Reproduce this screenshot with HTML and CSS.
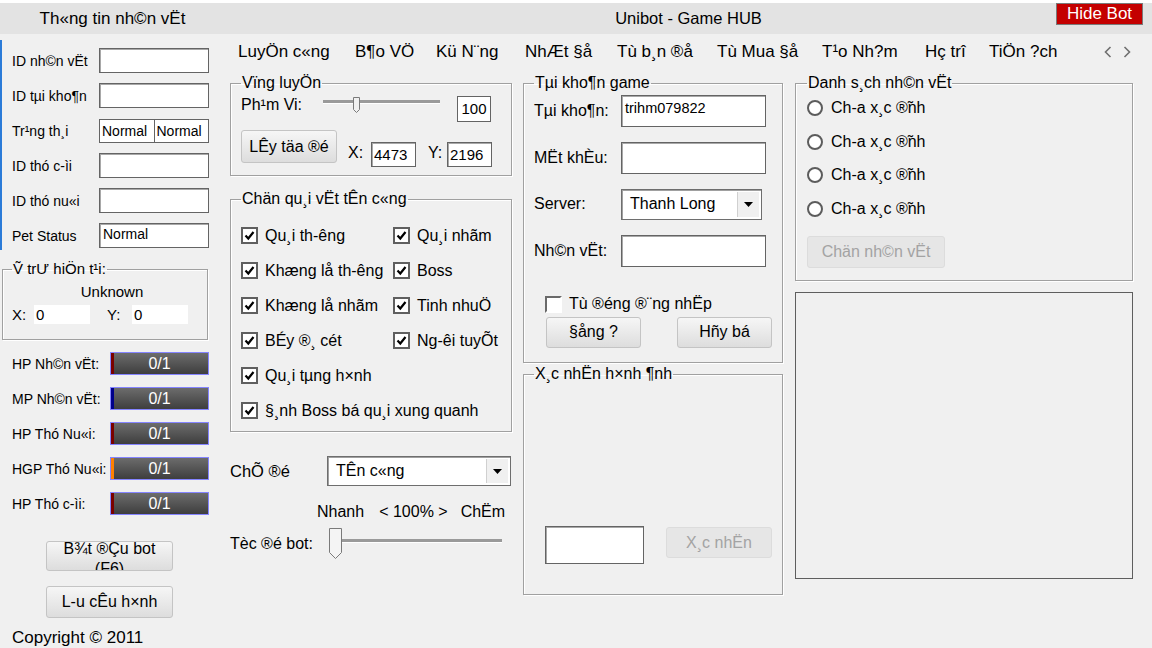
FILE: index.html
```html
<!DOCTYPE html>
<html>
<head>
<meta charset="utf-8">
<title>Unibot - Game HUB</title>
<link rel="stylesheet" href="styles.css">
</head>
<body>
<div class="topline"></div>
<div class="titlebar">
  <div class="side-title">Th«ng tin nh©n vËt</div>
  <div class="app-title">Unibot - Game HUB</div>
  <div class="hide-bot">Hide Bot</div>
</div>
<div class="main">
  <div class="side">
    <div class="fields">
      <label>ID nh©n vËt</label><div class="input"></div>
      <label>ID tµi kho¶n</label><div class="input"></div>
      <label>Tr¹ng th¸i</label><div class="pair"><div>Normal</div><div>Normal</div></div>
      <label>ID thó c-ìi</label><div class="input"></div>
      <label>ID thó nu«i</label><div class="input"></div>
      <label>Pet Status</label><div class="input status">Normal</div>
    </div>
    <fieldset class="pos">
      <legend>Ṽ trƯ hiÖn t¹i:</legend>
      <div class="unknown">Unknown</div>
      <div class="xy">
        <span class="xl">X:</span><div class="coord">0</div>
        <span class="yl">Y:</span><div class="coord">0</div>
      </div>
    </fieldset>
    <div class="bars">
      <label>HP Nh©n vËt:</label><div class="bar hp">0/1</div>
      <label>MP Nh©n vËt:</label><div class="bar mp">0/1</div>
      <label>HP Thó Nu«i:</label><div class="bar hp">0/1</div>
      <label>HGP Thó Nu«i:</label><div class="bar hgp">0/1</div>
      <label>HP Thó c-ìi:</label><div class="bar hp">0/1</div>
    </div>
    <div class="side-buttons">
      <div class="btn side-btn start"><span>B¾t ®Çu bot (F6)</span></div>
      <div class="btn side-btn save">L-u cÊu h×nh</div>
    </div>
    <div class="copyright">Copyright © 2011</div>
  </div>

  <div class="content">
    <div class="tabs">
      <div>LuyÖn c«ng</div>
      <div>B¶o VÖ</div>
      <div>Kü N¨ng</div>
      <div>NhÆt §å</div>
      <div>Tù b¸n ®å</div>
      <div>Tù Mua §å</div>
      <div>T¹o Nh?m</div>
      <div>Hç trî</div>
      <div>TiÖn ?ch</div>
      <div></div>
      <div class="arrows">
        <svg width="8" height="12" viewBox="0 0 8 12"><path d="M6.5 1 L1.5 6 L6.5 11" fill="none" stroke="#707070" stroke-width="1.6"/></svg>
        <svg width="8" height="12" viewBox="0 0 8 12"><path d="M1.5 1 L6.5 6 L1.5 11" fill="none" stroke="#707070" stroke-width="1.6"/></svg>
      </div>
    </div>

    <div class="cols">
      <div class="col col-train">
        <fieldset class="range">
          <legend>Vïng luyÖn</legend>
          <div class="range-row">
            <span class="range-label">Ph¹m Vi:</span>
            <svg class="range-slider" width="117" height="20" viewBox="0 0 117 20">
              <rect x="0" y="4" width="117" height="3" fill="#9a9a9a"/>
              <rect x="0" y="7" width="117" height="1" fill="#ffffff"/>
              <polygon points="30.5,1.5 36.5,1.5 36.5,13.5 33.5,16.5 30.5,13.5" fill="#f0f0f0" stroke="#7a7a7a"/>
            </svg>
            <div class="num-box">100</div>
          </div>
          <div class="coord-row">
            <div class="btn get-pos">LÊy täa ®é</div>
            <span class="c-x">X:</span><div class="num-box small">4473</div>
            <span class="c-y">Y:</span><div class="num-box small">2196</div>
          </div>
        </fieldset>

        <fieldset class="targets">
          <legend>Chän qu¸i vËt tÊn c«ng</legend>
          <div class="check-grid">
            <div class="check"><span class="cb on"><svg width="13" height="13" viewBox="0 0 13 13"><path d="M2.5 6.5 L5.3 9.5 L10.5 3" fill="none" stroke="#000" stroke-width="2.2"/></svg></span>Qu¸i th-êng</div>
            <div class="check"><span class="cb on"><svg width="13" height="13" viewBox="0 0 13 13"><path d="M2.5 6.5 L5.3 9.5 L10.5 3" fill="none" stroke="#000" stroke-width="2.2"/></svg></span>Qu¸i nhãm</div>
            <div class="check"><span class="cb on"><svg width="13" height="13" viewBox="0 0 13 13"><path d="M2.5 6.5 L5.3 9.5 L10.5 3" fill="none" stroke="#000" stroke-width="2.2"/></svg></span>Khæng lå th-êng</div>
            <div class="check"><span class="cb on"><svg width="13" height="13" viewBox="0 0 13 13"><path d="M2.5 6.5 L5.3 9.5 L10.5 3" fill="none" stroke="#000" stroke-width="2.2"/></svg></span>Boss</div>
            <div class="check"><span class="cb on"><svg width="13" height="13" viewBox="0 0 13 13"><path d="M2.5 6.5 L5.3 9.5 L10.5 3" fill="none" stroke="#000" stroke-width="2.2"/></svg></span>Khæng lå nhãm</div>
            <div class="check"><span class="cb on"><svg width="13" height="13" viewBox="0 0 13 13"><path d="M2.5 6.5 L5.3 9.5 L10.5 3" fill="none" stroke="#000" stroke-width="2.2"/></svg></span>Tinh nhuÖ</div>
            <div class="check"><span class="cb on"><svg width="13" height="13" viewBox="0 0 13 13"><path d="M2.5 6.5 L5.3 9.5 L10.5 3" fill="none" stroke="#000" stroke-width="2.2"/></svg></span>BÉy ®¸ cét</div>
            <div class="check"><span class="cb on"><svg width="13" height="13" viewBox="0 0 13 13"><path d="M2.5 6.5 L5.3 9.5 L10.5 3" fill="none" stroke="#000" stroke-width="2.2"/></svg></span>Ng-êi tuyÕt</div>
            <div class="check wide"><span class="cb on"><svg width="13" height="13" viewBox="0 0 13 13"><path d="M2.5 6.5 L5.3 9.5 L10.5 3" fill="none" stroke="#000" stroke-width="2.2"/></svg></span>Qu¸i tµng h×nh</div>
            <div class="check wide"><span class="cb on"><svg width="13" height="13" viewBox="0 0 13 13"><path d="M2.5 6.5 L5.3 9.5 L10.5 3" fill="none" stroke="#000" stroke-width="2.2"/></svg></span>§¸nh Boss bá qu¸i xung quanh</div>
          </div>
        </fieldset>

        <div class="mode-row">
          <span class="mode-label">ChÕ ®é</span>
          <div class="select mode-select">
            <span class="select-text">TÊn c«ng</span>
            <span class="select-btn"><svg width="9" height="5" viewBox="0 0 9 5"><polygon points="0,0 9,0 4.5,5" fill="#000"/></svg></span>
          </div>
        </div>
        <div class="speed-labels">
          <span>Nhanh</span><span class="pct">&lt; 100% &gt;</span><span class="slow">ChËm</span>
        </div>
        <div class="speed-row">
          <span class="speed-label">Tèc ®é bot:</span>
          <svg width="173" height="31" viewBox="0 0 173 31">
            <rect x="11" y="11" width="162" height="3" fill="#9a9a9a"/>
            <rect x="11" y="14" width="162" height="1" fill="#ffffff"/>
            <polygon points="0.5,0.5 12.5,0.5 12.5,24.5 6.5,30.5 0.5,24.5" fill="#f4f4f4" stroke="#7a7a7a"/>
          </svg>
        </div>
      </div>

      <div class="col col-account">
        <fieldset class="account">
          <legend>Tµi kho¶n game</legend>
          <div class="form">
            <label>Tµi kho¶n:</label><div class="input text-in">trihm079822</div>
            <label>MËt khÈu:</label><div class="input"></div>
            <label>Server:</label>
            <div class="select server-select">
              <span class="select-text">Thanh Long</span>
              <span class="select-btn"><svg width="9" height="5" viewBox="0 0 9 5"><polygon points="0,0 9,0 4.5,5" fill="#000"/></svg></span>
            </div>
            <label>Nh©n vËt:</label><div class="input"></div>
          </div>
          <div class="auto-login"><span class="cb off"></span>Tù ®éng ®¨ng nhËp</div>
          <div class="account-buttons">
            <div class="btn acc-btn">§ång ?</div>
            <div class="btn acc-btn">Hñy bá</div>
          </div>
        </fieldset>
        <fieldset class="captcha">
          <legend>X¸c nhËn h×nh ¶nh</legend>
          <div class="captcha-row">
            <div class="input captcha-in"></div>
            <div class="btn disabled confirm">X¸c nhËn</div>
          </div>
        </fieldset>
      </div>

      <div class="col col-chars">
        <fieldset class="chars">
          <legend>Danh s¸ch nh©n vËt</legend>
          <div class="radio-list">
            <div class="radio-row"><span class="radio"></span>Ch-a x¸c ®̃nh</div>
            <div class="radio-row"><span class="radio"></span>Ch-a x¸c ®̃nh</div>
            <div class="radio-row"><span class="radio"></span>Ch-a x¸c ®̃nh</div>
            <div class="radio-row"><span class="radio"></span>Ch-a x¸c ®̃nh</div>
          </div>
          <div class="btn disabled pick">Chän nh©n vËt</div>
        </fieldset>
        <div class="preview"></div>
      </div>
    </div>
  </div>
</div>
</body>
</html>
```

FILE: styles.css
```css
* { box-sizing: border-box; }
html, body { margin: 0; padding: 0; }
body {
  width: 1152px;
  height: 648px;
  overflow: hidden;
  background: #f0f0f0;
  font-family: "Liberation Sans", Arial, sans-serif;
  font-size: 16px;
  color: #000;
}

/* title */
.topline { height: 3px; background: #fff; }
.titlebar {
  position: relative;
  height: 31px;
  background: #e3e3e3;
  display: flex;
  align-items: center;
}
.side-title { width: 225px; text-align: center; font-size: 17px; }
.app-title { flex: 1; text-align: center; font-size: 16.5px; }
.hide-bot {
  position: absolute;
  right: 9px;
  top: 0;
  width: 87px;
  height: 22px;
  background: #c40000;
  border: 1px solid #7a7a7a;
  color: #fff;
  font-size: 17px;
  line-height: 20px;
  text-align: center;
}

.main { display: flex; height: 614px; }

/* left info panel */
.side { width: 225px; display: flex; flex-direction: column; }
.fields {
  display: grid;
  grid-template-columns: 87px 110px;
  grid-auto-rows: 25px;
  row-gap: 10px;
  align-items: center;
  margin-top: 6px;
  padding: 8px 0 2px 10px;
  border-left: 2px solid #2b7bd8;
  font-size: 14px;
}
.input {
  height: 100%;
  background: #fff;
  border: 1px solid #646464;
  box-shadow: inset 1px 1px 0 #a8a8a8;
}
.input.status { font-size: 14px; padding: 2px 0 0 3px; }
.pair {
  display: flex;
  height: 24px;
  border: 1px solid #646464;
  background: #fff;
  font-size: 14px;
}
.pair div { flex: 1; padding: 3px 0 0 2px; }
.pair div:first-child { border-right: 1px solid #646464; }

fieldset {
  margin: 0;
  padding: 0 10px;
  border: 1px solid #a0a0a0;
  box-shadow: 1px 1px 0 #fff, inset 1px 1px 0 #fff;
  min-width: 0;
}
legend {
  padding: 0 1px;
  line-height: 18px;
  font-size: 16px;
}

.pos {
  margin: 10px 0 0 2px;
  width: 206px;
  height: 80px;
  padding: 0 9px;
}
.pos legend { font-size: 15px; }
.unknown { text-align: center; padding-left: 14px; font-size: 15px; line-height: 16px; margin-top: 6px; }
.xy { display: flex; align-items: center; height: 19px; margin-top: 5px; font-size: 15px; }
.xl { width: 22px; }
.yl { width: 25px; margin-left: 17px; }
.coord { width: 56px; height: 19px; background: #fff; padding-left: 2px; line-height: 19px; }

.bars {
  display: grid;
  grid-template-columns: 98px 99px;
  grid-auto-rows: 23px;
  row-gap: 12px;
  align-items: center;
  padding-left: 12px;
  margin-top: 12px;
  font-size: 14px;
}
.bar {
  height: 23px;
  border: 1px solid #8484ff;
  background: linear-gradient(#6c6c6c, #3e3e3e);
  color: #fff;
  text-align: center;
  line-height: 21px;
  font-size: 16px;
}
.bar.hp { box-shadow: inset 3px 0 0 #7a0000; }
.bar.mp { box-shadow: inset 3px 0 0 #00008a; }
.bar.hgp { box-shadow: inset 3px 0 0 #ff8000; }

.btn {
  display: flex;
  align-items: center;
  justify-content: center;
  background: linear-gradient(#f6f6f6, #dddddd);
  border: 1px solid #c4c4c4;
  border-radius: 3px;
  overflow: hidden;
  text-align: center;
}
.btn.disabled { background: #e6e6e6; border-color: #dcdcdc; color: #a3a3a3; }
.side-buttons { display: flex; flex-direction: column; gap: 15px; margin-top: 26px; padding-left: 46px; }
.side-btn { width: 127px; height: 30px; }
.side-btn.save { height: 32px; }
.start { align-items: flex-start; }
.start span { max-width: 100px; line-height: 20px; margin-top: -3px; }
.copyright { padding-left: 12px; margin-top: 11px; font-size: 17px; line-height: 18px; }

/* main content */
.content { flex: 1; padding-left: 5px; }
.tabs {
  display: grid;
  grid-template-columns: 117px 81px 89px 92px 100px 105px 103px 64px auto 1fr auto;
  align-items: start;
  height: 40px;
  padding: 8px 21px 0 8px;
  font-size: 17px;
  line-height: 19px;
}
.arrows { display: flex; gap: 11px; align-items: center; height: 19px; }

.cols { display: flex; gap: 11px; }
.col { display: flex; flex-direction: column; }
.col-train { width: 282px; }
.col-account { width: 260px; }
.col-chars { width: 338px; margin-left: 1px; }

.range { height: 102px; }
.range-row { display: flex; align-items: flex-start; height: 26px; margin-top: 4px; }
.range-label { width: 82px; line-height: 18px; }
.num-box {
  width: 34px;
  height: 26px;
  margin-left: 17px;
  background: #fff;
  border: 1px solid #646464;
  font-size: 15px;
  text-align: center;
  line-height: 24px;
}
.coord-row { display: flex; align-items: flex-end; height: 37px; margin-top: 8px; }
.get-pos { width: 96px; height: 33px; align-self: flex-start; }
.c-x { width: 23px; margin-left: 11px; margin-bottom: 5px; }
.c-y { width: 19px; margin-left: 12px; margin-bottom: 5px; }
.num-box.small { width: 45px; height: 25px; margin-left: 0; text-align: left; padding-left: 2px; line-height: 23px; box-shadow: inset 1px 1px 0 #a8a8a8; }

.targets { height: 242px; margin-top: 14px; }
.check-grid {
  display: grid;
  grid-template-columns: 152px 1fr;
  grid-auto-rows: 21px;
  row-gap: 14px;
  padding-top: 17px;
}
.check { display: flex; align-items: center; gap: 7px; white-space: nowrap; }
.check.wide { grid-column: 1 / -1; }
.cb {
  flex: none;
  width: 17px;
  height: 17px;
  background: #fff;
  border: 2px solid #5f5f5f;
  display: flex;
}
.cb.off { border-color: #6a6a6a #fff #fff #6a6a6a; }

.mode-row { display: flex; align-items: center; height: 30px; margin-top: 24px; }
.mode-label { width: 97px; font-size: 16.5px; }
.select {
  display: flex;
  align-items: center;
  background: #fff;
  border: 1px solid #6e6e6e;
  box-shadow: inset 1px 1px 0 #a0a0a0;
  padding: 2px;
}
.select-text { flex: 1; padding-left: 6px; }
.select-btn {
  width: 22px;
  height: 100%;
  background: #f0f0f0;
  border-left: 1px solid #d0d0d0;
  display: flex;
  align-items: center;
  justify-content: center;
}
.mode-select { width: 184px; height: 30px; }
.speed-labels { display: flex; padding-left: 87px; margin-top: 18px; line-height: 16px; }
.pct { margin-left: 15px; }
.slow { margin-left: 13px; }
.speed-row { display: flex; align-items: center; height: 31px; margin-top: 8px; }
.speed-label { width: 99px; }

.account { height: 289px; padding-top: 3px; }
.form {
  display: grid;
  grid-template-columns: 87px 145px;
  grid-auto-rows: 32px;
  row-gap: 14.5px;
  align-items: center;
}
.text-in { font-size: 14.5px; padding: 4px 0 0 3px; }
.server-select { width: 141px; height: 31px; }
.auto-login { display: flex; align-items: center; gap: 7px; margin: 29px 0 0 11px; height: 17px; }
.account-buttons { display: flex; gap: 36px; margin-top: 4px; padding-left: 12px; }
.acc-btn { width: 95px; height: 31px; }

.captcha { height: 230px; margin-top: 2px; }
.captcha-row { display: flex; align-items: flex-start; margin-top: 143px; padding-left: 11px; }
.captcha-in { width: 99px; height: 38px; }
.confirm { width: 106px; height: 31px; margin: 1px 0 0 22px; }

.chars { height: 207px; padding: 0 11px; }
.radio-list { display: grid; grid-auto-rows: 20px; row-gap: 13.5px; margin-top: 6px; }
.radio-row { display: flex; align-items: center; gap: 8px; }
.radio {
  width: 16px;
  height: 16px;
  border-radius: 50%;
  border: 2.5px solid #5c5c5c;
  background: #fff;
}
.pick { width: 138px; height: 32px; margin-top: 17px; }
.preview { height: 287px; margin-top: 11px; border: 1px solid #5e5e5e; }
```
